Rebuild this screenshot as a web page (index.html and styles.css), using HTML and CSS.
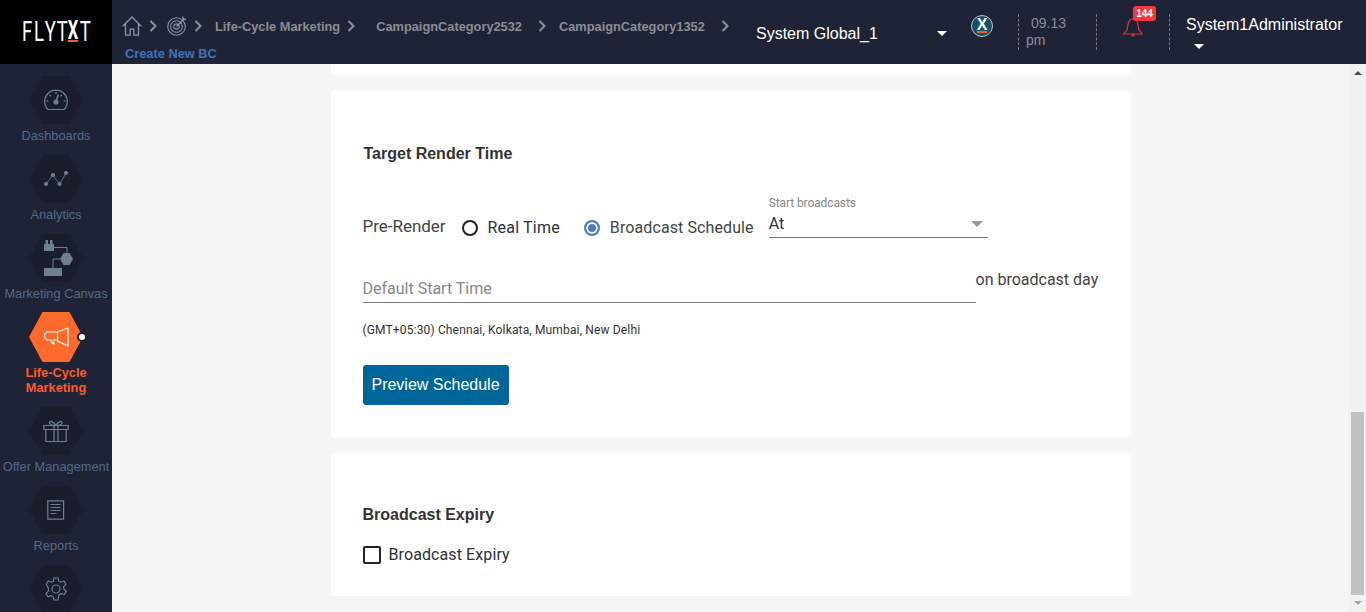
FILE: index.html
```html
<!DOCTYPE html>
<html>
<head>
	<title>Target Render Time</title>
	<meta charset="utf-8">
	<link rel="stylesheet" href="styles.css">
</head>
<body>

<header class="topbar">
	<div class="logo"><span>F</span><span>L</span><span>Y</span><span>T</span><span class="logo-x">X</span><span>T</span></div>
	<div class="crumbs">
		<div class="crumb-row">
			<svg class="crumb-home" width="20" height="20" viewBox="0 0 20 20" fill="none" stroke="#8d94a3" stroke-width="1.3"><path d="M.7 10.3 10 1l9.3 9.3M3.5 8v11.2h4.6v-6h3.8v6h4.6V8"/></svg>
			<svg class="chev" width="9" height="12" viewBox="0 0 9 12" fill="none" stroke="#8f9199" stroke-width="2"><path d="m1.5 1 5 5-5 5"/></svg>
			<svg class="crumb-target" width="20" height="20" viewBox="0 0 20 20" fill="none" stroke="#8d94a3" stroke-width="1.1"><circle cx="9.5" cy="10.5" r="8.8"/><circle cx="9.5" cy="10.5" r="5.8"/><circle cx="9.5" cy="10.5" r="2.6"/><path d="m9.5 10.5 8-8M16 0.8v2.6h3" stroke-width="1.4"/></svg>
			<svg class="chev" width="9" height="12" viewBox="0 0 9 12" fill="none" stroke="#8f9199" stroke-width="2"><path d="m1.5 1 5 5-5 5"/></svg>
			<a class="crumb crumb-first">Life-Cycle Marketing</a>
			<svg class="chev" width="9" height="12" viewBox="0 0 9 12" fill="none" stroke="#8f9199" stroke-width="2"><path d="m1.5 1 5 5-5 5"/></svg>
			<a class="crumb crumb-wide">CampaignCategory2532</a>
			<svg class="chev" width="9" height="12" viewBox="0 0 9 12" fill="none" stroke="#8f9199" stroke-width="2"><path d="m1.5 1 5 5-5 5"/></svg>
			<a class="crumb crumb-mid">CampaignCategory1352</a>
			<svg class="chev" width="9" height="12" viewBox="0 0 9 12" fill="none" stroke="#8f9199" stroke-width="2"><path d="m1.5 1 5 5-5 5"/></svg>
		</div>
		<a class="create-link">Create New BC</a>
	</div>
	<div class="org">
		<span>System Global_1</span>
		<i class="caret"></i>
	</div>
	<div class="x-badge"><span>X</span></div>
	<div class="clock"><span class="clock-time">09.13</span><span>pm</span></div>
	<div class="bell">
		<svg width="20" height="20" viewBox="0 0 20 20" fill="none" stroke="#e2333a" stroke-width="1.2"><path d="M.8 16h18.4L16 12 14.6 5C14 2.400 12 1 10 1S6 2.400 5.400 5L4 12ZM9.300 16.200V18h1.400v-1.800"/></svg>
		<span class="bell-count">144</span>
	</div>
	<div class="user">
		<span>System1Administrator</span>
		<i class="caret"></i>
	</div>
</header>

<div class="layout">
	<nav class="sidebar">
		<a class="nav-item">
			<span class="hex"><svg width="24" height="22" viewBox="0 0 24 22" fill="none" stroke="#6c808f" stroke-width="1.2"><path d="M4 20.500a11.300 11.300 0 1 1 16 0Z"/><path d="M2 12h2.500M19.500 12H22M12 3v2M5.500 5.800l1.500 1.500M18 5.800l-1.500 1.500"/><path d="m12 12.500 2.300-7" stroke-width="1.600"/><circle cx="12" cy="13" r="2" fill="#6c808f"/></svg></span>
			<span class="nav-label">Dashboards</span>
		</a>
		<a class="nav-item">
			<span class="hex"><svg width="24" height="16" viewBox="0 0 24 16" fill="#6c808f" stroke="#6c808f" stroke-width=".8"><path d="M2 13 9 4l6.500 9.500L22 2" fill="none"/><circle cx="2" cy="13" r="1.700"/><circle cx="9" cy="4" r="1.700"/><circle cx="15.500" cy="13" r="1.700"/><circle cx="22" cy="2" r="1.700"/></svg></span>
			<span class="nav-label">Analytics</span>
		</a>
		<a class="nav-item">
			<span class="hex"><svg width="36" height="36" viewBox="-6 0 36 36" fill="#6c808f"><path d="M0 4h10v7H0zM1.500 0h2.500v4H1.500zM6 0h2.500v4H6z"/><path d="M10 7.500h13v6M16 19H9v9" fill="none" stroke="#6c808f"/><path d="m19.500 13 6 0 3.500 6-3.500 6h-6L16 19z"/><path d="M0 28h18v8H0z"/></svg></span>
			<span class="nav-label">Marketing Canvas</span>
		</a>
		<a class="nav-item nav-active">
			<span class="hex"><svg width="25" height="20" viewBox="0 0 25 20" fill="none" stroke="#fff" stroke-width="1.200"><path d="M12.500 5H4a3.500 4 0 0 0 0 8h3l1 3 2 .8-.6-3.800h3.100"/><path d="M13.500 5 24 1v18l-10.500-5z"/></svg></span>
			<span class="nav-label">Life-Cycle Marketing</span>
			<i class="nav-dot"></i>
		</a>
		<a class="nav-item">
			<span class="hex"><svg width="26" height="22" viewBox="0 0 26 22" fill="none" stroke="#6c808f" stroke-width="1.200"><path d="M.8 5.500h24.400v4H.8zM2.800 9.500v12h20.400v-12M11 5.500v16M15 5.500v16"/><path d="M12.800 5.300C10 1 6.500.5 6.500 2.800s3.500 2.700 6.300 2.500c2.800.2 6.300-.2 6.300-2.500S15.600 1 12.800 5.300Z"/></svg></span>
			<span class="nav-label">Offer Management</span>
		</a>
		<a class="nav-item">
			<span class="hex"><svg width="18" height="20" viewBox="0 0 18 20" fill="none" stroke="#6c808f" stroke-width="1.200"><path d="M.8.800h15.800v18.400H.8zM3.500 4.500h10M3.500 7.500h10M3.500 10.500h10M3.500 13.500h6"/></svg></span>
			<span class="nav-label">Reports</span>
		</a>
		<a class="nav-item">
			<span class="hex"><svg width="24" height="24" viewBox="0 0 24 24" fill="none" stroke="#6c808f" stroke-width="1.200"><circle cx="12" cy="12" r="4"/><path d="M10 1h4l.7 3.200 2.200 1 3-1.300 2 3.400-2.300 2.300.2 2.400 2.400 2.200-2 3.400-3.100-1-2.100 1.100L14 23h-4l-.8-3.200-2.100-1.100-3.100 1-2-3.400 2.400-2.200.2-2.400L2.300 7.300l2-3.400 3 1.300 2.200-1z"/></svg></span>
		</a>
	</nav>

	<main class="content">
		<div class="card card-stub"></div>

		<section class="card card-render">
			<h2 class="card-title title-render">Target Render Time</h2>
			<div class="schedule-row">
				<span class="field-name">Pre-Render</span>
				<label class="radio"><i class="radio-mark"></i>Real Time</label>
				<label class="radio radio-on"><i class="radio-mark"></i>Broadcast Schedule</label>
				<div class="select-field">
					<span class="select-label">Start broadcasts</span>
					<div class="select-value">At<i class="select-arrow"></i></div>
				</div>
			</div>
			<div class="time-row">
				<div class="time-input">Default Start Time</div>
				<span class="time-after">on broadcast day</span>
			</div>
			<p class="timezone">(GMT+05:30) Chennai, Kolkata, Mumbai, New Delhi</p>
			<button class="btn-preview">Preview Schedule</button>
		</section>

		<section class="card card-expiry">
			<h2 class="card-title">Broadcast Expiry</h2>
			<label class="check"><i class="check-box"></i>Broadcast Expiry</label>
		</section>
	</main>

	<div class="scrollbar">
		<i class="arrow-up"></i>
		<div class="scroll-space"></div>
		<div class="scroll-thumb"></div>
		<i class="arrow-down"></i>
	</div>
</div>

</body>
</html>
```

FILE: styles.css
```css
* {
	box-sizing: border-box;
}
html, body {
	height: 100%;
}
body {
	margin: 0;
	overflow: hidden;
	display: flex;
	flex-direction: column;
	font-family: "Liberation Sans", Arial, sans-serif;
	background: #f5f5f5;
}

/* top bar */
.topbar {
	flex: none;
	display: flex;
	height: 64px;
	background: #1f2336;
	color: #fff;
}
.logo {
	flex: none;
	display: flex;
	justify-content: center;
	align-items: center;
	width: 112px;
	background: #000;
	font-family: Roboto, sans-serif;
	font-weight: 400;
	font-size: 28px;
	line-height: 20px;
}
.logo span {
	display: block;
	width: 16px;
	margin: 0 -2.25px;
	text-align: center;
	transform: scaleX(.66);
}
.logo .logo-x {
	height: 20px;
	line-height: 18px;
	border-bottom: 2px solid #e8622c;
	font-weight: 700;
	font-size: 25px;
}
.crumbs {
	flex: none;
	width: 634px;
	padding: 16px 0 0 10px;
}
.crumb-row {
	display: flex;
	align-items: center;
	height: 20px;
}
.chev {
	flex: none;
	margin-left: 7px;
}
.crumb-target {
	margin-left: 9px;
}
.crumb {
	font-size: 12.8px;
	font-weight: bold;
	color: #8a8c94;
	margin-left: 12px;
	white-space: nowrap;
}
.crumb-wide {
	margin-left: 20px;
}
.crumb-wide + .chev {
	margin-left: 16px;
}
.crumb-mid + .chev {
	margin-left: 16px;
}
.create-link {
	display: block;
	margin: 10px 0 0 3px;
	font-size: 12.8px;
	font-weight: bold;
	line-height: 16px;
	color: #3f72b8;
}
.org {
	flex: none;
	display: flex;
	align-items: center;
	justify-content: space-between;
	width: 191px;
	height: 67px;
	margin-left: 10px;
	font-size: 16px;
}
.caret {
	display: block;
	width: 0;
	height: 0;
	border-left: 5px solid transparent;
	border-right: 5px solid transparent;
	border-top: 5px solid #fff;
}
.x-badge {
	flex: none;
	display: flex;
	align-items: center;
	justify-content: center;
	width: 22px;
	height: 22px;
	margin: 15px 0 0 24px;
	border-radius: 50%;
	background: #14506a;
	border: 1px solid #b5c4cc;
	font-size: 16px;
	font-weight: bold;
}
.x-badge span {
	border-bottom: 2px solid #e8622c;
	line-height: 12px;
}
.clock {
	flex: none;
	display: flex;
	flex-direction: column;
	width: 79px;
	height: 36px;
	margin: 14px 0 0 25px;
	padding: 1px 0 0 7px;
	border-left: 1px dashed #777;
	border-right: 1px dashed #777;
	font-size: 14px;
	line-height: 17px;
	color: #8a8c94;
}
.clock-time {
	padding-left: 5px;
}
.bell {
	flex: none;
	position: relative;
	width: 73px;
	height: 36px;
	margin-top: 14px;
	padding: 4px 0 0 26px;
	border-right: 1px dashed #777;
}
.bell svg {
	display: block;
}
.bell-count {
	position: absolute;
	left: 36px;
	top: -8px;
	width: 23px;
	height: 15px;
	border-radius: 3px;
	background: #f5363d;
	text-align: center;
	font-size: 10px;
	font-weight: bold;
	line-height: 15px;
}
.user {
	flex: none;
	display: flex;
	flex-direction: column;
	gap: 10px;
	padding: 16px 0 0 16px;
	font-size: 16px;
	line-height: 18px;
}
.user .caret {
	margin-left: 8px;
}

/* page under the bar */
.layout {
	flex: 1;
	display: flex;
	min-height: 0;
}
.sidebar {
	flex: none;
	display: flex;
	flex-direction: column;
	gap: 12px;
	width: 112px;
	height: 548px;
	overflow: hidden;
	padding-top: 12px;
	background: #1f2336;
}
.nav-item {
	flex: none;
	position: relative;
	display: flex;
	flex-direction: column;
	align-items: center;
	height: 67px;
}
.hex {
	display: flex;
	align-items: center;
	justify-content: center;
	flex: none;
	width: 54px;
	height: 48px;
	background: #191d2c;
	clip-path: polygon(25% 0, 75% 0, 100% 50%, 75% 100%, 25% 100%, 0 50%);
}
.nav-label {
	margin-top: 4px;
	font-size: 12.8px;
	line-height: 16px;
	color: #4f6b8a;
	white-space: nowrap;
	text-align: center;
}
.nav-active {
	height: 83px;
	margin-top: -1px;
}
.nav-active .hex {
	height: 50px;
	background: #ff6a2b;
}
.nav-active .nav-label {
	width: 80px;
	margin-top: 3px;
	white-space: normal;
	font-weight: bold;
	line-height: 15px;
	color: #ff5a2a;
}
.nav-dot {
	position: absolute;
	left: 77px;
	top: 20px;
	width: 10px;
	height: 10px;
	border-radius: 50%;
	background: #fff;
	border: 2px solid #1f2336;
}

/* cards */
.content {
	flex: 1;
	min-width: 0;
}
.card {
	width: 800px;
	margin: 0 auto 16px;
	background: #fff;
	border-radius: 3px;
	padding: 0 32px;
	color: #333;
}
.card-stub {
	height: 11px;
	border-radius: 0 0 3px 3px;
}
.card-render {
	height: 346px;
	padding-top: 53px;
}
.card-expiry {
	height: 143px;
	padding-top: 52px;
}
.card-title {
	margin: 0;
	font-size: 16px;
	font-weight: bold;
	line-height: 20px;
	color: #333;
}
.title-render {
	padding-left: 1px;
}
.schedule-row {
	display: flex;
	align-items: flex-end;
	margin-top: 32px;
	height: 42px;
	font-family: Roboto, sans-serif;
	font-size: 16px;
	line-height: 20px;
	color: #2c2f3e;
}
.field-name {
	width: 99px;
	padding-bottom: 2px;
	font-size: 17px;
	letter-spacing: -.02px;
	color: #444;
}
.radio {
	display: flex;
	align-items: center;
	gap: 10px;
	margin-right: 24px;
	letter-spacing: .2px;
}
.radio-on {
	margin-right: 15px;
	letter-spacing: .1px;
	color: #444;
}
.radio-mark {
	width: 16px;
	height: 16px;
	border: 2px solid #1f2336;
	border-radius: 50%;
	background: #fff;
}
.radio-on .radio-mark {
	border-color: #4a7cc7;
	box-shadow: inset 0 0 0 2px #fff;
	background: #4a7cc7;
}
.select-field {
	width: 219px;
}
.select-label {
	display: block;
	font-size: 12px;
	line-height: 14px;
	letter-spacing: -.1px;
	color: #888;
}
.select-value {
	display: flex;
	justify-content: space-between;
	align-items: center;
	height: 28px;
	padding: 0 5px 0 0;
	border-bottom: 1px solid #777;
}
.select-arrow {
	width: 0;
	height: 0;
	border-left: 6px solid transparent;
	border-right: 6px solid transparent;
	border-top: 6px solid #999;
}
.time-row {
	display: flex;
	margin-top: 30px;
	font-family: Roboto, sans-serif;
	font-size: 16px;
	line-height: 20px;
}
.time-input {
	width: 613px;
	height: 35px;
	padding-top: 11px;
	border-bottom: 1px solid #777;
	color: #888;
}
.time-after {
	padding-top: 2px;
	color: #444;
}
.timezone {
	margin: 19px 0 0;
	font-family: Roboto, sans-serif;
	font-size: 12px;
	line-height: 16px;
	letter-spacing: .15px;
	color: #333;
}
.btn-preview {
	display: block;
	width: 146px;
	height: 40px;
	margin-top: 27px;
	padding: 0;
	border: 0;
	border-radius: 3px;
	background: #006699;
	color: #fff;
	font-family: "Liberation Sans", Arial, sans-serif;
	font-size: 16px;
}
.check {
	display: flex;
	align-items: center;
	gap: 8px;
	margin-top: 20px;
	font-family: Roboto, sans-serif;
	font-size: 16px;
	line-height: 20px;
	letter-spacing: .1px;
	color: #2c2f3e;
}
.check-box {
	width: 18px;
	height: 18px;
	border: 2px solid #1f2336;
	border-radius: 2px;
}

/* scrollbar */
.scrollbar {
	flex: none;
	display: flex;
	flex-direction: column;
	align-items: center;
	width: 17px;
	height: 548px;
	background: #f1f1f1;
}
.scroll-space {
	flex: 1;
}
.scroll-thumb {
	width: 13px;
	height: 183px;
	background: #c1c1c1;
}
.arrow-up, .arrow-down {
	width: 0;
	height: 0;
	border-left: 4px solid transparent;
	border-right: 4px solid transparent;
}
.arrow-up {
	margin-top: 7px;
	border-bottom: 4px solid #505050;
}
.arrow-down {
	margin: 6px 0 7px;
	border-top: 4px solid #a3a3a3;
}
```
